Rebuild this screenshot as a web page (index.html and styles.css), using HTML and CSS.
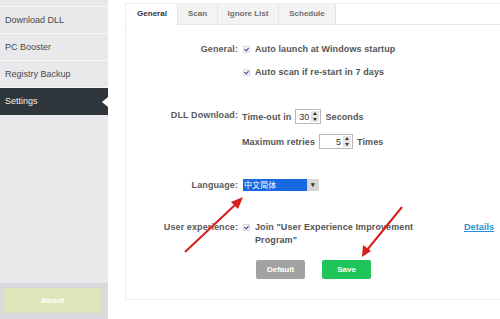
FILE: index.html
```html
<!DOCTYPE html>
<html lang="en">
<head>
  <meta charset="UTF-8">
  <title>Settings</title>
  <link rel="stylesheet" href="styles.css">
</head>
<body>

  <div class="app">
    <aside class="sidebar">
      <div class="menu">
        <div class="menu-item cut"></div>
        <div class="menu-item">Download DLL</div>
        <div class="menu-item">PC Booster</div>
        <div class="menu-item">Registry Backup</div>
        <div class="menu-item active">Settings</div>
      </div>
      <div class="sidebar-foot">
        <button class="about-btn">About</button>
      </div>
    </aside>

    <main class="main">
      <div class="panel">
        <div class="tabs">
          <div class="tab active">General</div>
          <div class="tab">Scan</div>
          <div class="tab">Ignore List</div>
          <div class="tab">Schedule</div>
        </div>

        <div class="form">
          <div class="row r1">
            <div class="label">General:</div>
            <div class="value"><span class="check"></span>Auto launch at Windows startup</div>
          </div>
          <div class="row r2">
            <div class="label"></div>
            <div class="value"><span class="check"></span>Auto scan if re-start in 7 days</div>
          </div>

          <div class="row r3">
            <div class="label">DLL Download:</div>
            <div class="value">Time-out in <span class="spin w25">30<i class="arrows"></i></span> Seconds</div>
          </div>
          <div class="row r4">
            <div class="label"></div>
            <div class="value">Maximum retries <span class="spin w34">5<i class="arrows"></i></span> Times</div>
          </div>

          <div class="row r5">
            <div class="label">Language:</div>
            <div class="value">
              <span class="select"><span class="select-text">中文简体</span><span class="select-btn">▾</span></span>
            </div>
          </div>

          <div class="row r6">
            <div class="label">User experience:</div>
            <div class="value top">
              <span class="check"></span>
              <span class="join">Join "User Experience Improvement Program"</span>
              <a class="details" href="#">Details</a>
            </div>
          </div>

          <div class="buttons">
            <button class="btn btn-default">Default</button>
            <button class="btn btn-save">Save</button>
          </div>
        </div>
      </div>
    </main>
  </div>

  <!-- red annotation arrows over the page -->
  <svg class="arrows-overlay" width="500" height="319" viewBox="0 0 500 319">
    <line x1="185" y1="252" x2="236" y2="204" stroke="#d81e1e" stroke-width="2"/>
    <polygon points="243,197 231,202 238,209" fill="#d81e1e"/>
    <line x1="402" y1="207" x2="367" y2="250" stroke="#d81e1e" stroke-width="2"/>
    <polygon points="362,257 363,245 371,251" fill="#d81e1e"/>
  </svg>

</body>
</html>
```

FILE: styles.css
```css
* {
  margin: 0;
  padding: 0;
  box-sizing: border-box;
}

body {
  background: #fff;
  font-family: 'Liberation Sans', Arial, sans-serif;
  color: #555;
  width: 500px;
  height: 319px;
  overflow: hidden;
  position: relative;
}

.app {
  display: flex;
  height: 319px;
}

/* sidebar */
.sidebar {
  width: 108px;
  display: flex;
  flex-direction: column;
  background: #e9e9eb;
}

.menu {
  flex: 1;
}

.menu-item {
  height: 27px;
  line-height: 26px;
  padding-left: 5px;
  font-size: 9px;
  color: #4a4a4a;
  border-bottom: 1px solid #f6f6f7;
  position: relative;
}

.menu-item.cut {
  height: 7px;
}

.menu-item.active {
  background: #2f363c;
  color: #f2f2f2;
  border-bottom: none;
}

.menu-item.active::after {
  content: "";
  position: absolute;
  right: 0;
  top: 9px;
  border-style: solid;
  border-width: 5px 6px 5px 0;
  border-color: transparent #fff transparent transparent;
}

.sidebar-foot {
  height: 36px;
  background: #d9dadd;
  padding: 5px 7px 5px 4px;
}

.about-btn {
  width: 100%;
  height: 25px;
  border: none;
  background: #dfe5bb;
  color: #fff;
  font-family: inherit;
  font-size: 8px;
  font-weight: bold;
}

/* main panel */
.main {
  flex: 1;
  padding: 3px 0 0 17px;
}

.panel {
  height: 297px;
  border: 1px solid #ececec;
  border-right: none;
}

.tabs {
  display: flex;
  height: 21px;
  border-bottom: 1px solid #e8e8e8;
  padding-left: 1px;
}

.tab {
  line-height: 20px;
  font-size: 8px;
  font-weight: bold;
  color: #707070;
  background: #f3f3f3;
  border-right: 1px solid #e4e4e4;
  text-align: center;
}

.tab:nth-child(1) { width: 51px; }
.tab:nth-child(2) { width: 40px; }
.tab:nth-child(3) { width: 61px; }
.tab:nth-child(4) { width: 57px; }

.tab.active {
  background: #fff;
  color: #333;
  height: 21px;
}

/* form */
.form {
  font-size: 9px;
  font-weight: bold;
  letter-spacing: 0.1px;
}

.row {
  display: grid;
  grid-template-columns: 112px 1fr;
  column-gap: 4px;
  line-height: 12px;
}

.label {
  text-align: right;
  color: #5a5a5a;
}

.value {
  display: flex;
  align-items: center;
  color: #555;
  white-space: nowrap;
}

.value.top {
  align-items: flex-start;
}

.r1 { margin-top: 18px; }
.r2 { margin-top: 11px; }
.r3 { margin-top: 31px; }
.r4 { margin-top: 10px; }
.r5 { margin-top: 30px; }
.r6 { margin-top: 30px; line-height: 13px; }

.check {
  display: inline-block;
  width: 7px;
  height: 7px;
  margin: 0 5px 0 1px;
  border: 1px solid #dcdcdc;
  background: #f7f5fb;
  position: relative;
  flex: none;
}

.value.top .check {
  margin-top: 3px;
}

.check::after {
  content: "";
  position: absolute;
  left: 1px;
  top: 0;
  width: 2px;
  height: 3px;
  border: solid #5b2a9a;
  border-width: 0 1.5px 1.5px 0;
  transform: rotate(40deg);
}

.spin {
  display: inline-flex;
  justify-content: flex-end;
  align-items: center;
  height: 15px;
  margin: 0 4px;
  padding-right: 1px;
  border: 1px solid #b8b8b8;
  font-weight: normal;
  color: #333;
}

.w25 { width: 26px; }
.w34 { width: 34px; }

.arrows {
  width: 8px;
  height: 11px;
  margin-left: 2px;
  background: #e4e4e4;
  position: relative;
}

.arrows::before,
.arrows::after {
  content: "";
  position: absolute;
  left: 2px;
  border-style: solid;
  border-color: transparent;
}

.arrows::before {
  top: 1px;
  border-width: 0 2px 3px 2px;
  border-bottom-color: #333;
}

.arrows::after {
  bottom: 1px;
  border-width: 3px 2px 0 2px;
  border-top-color: #333;
}

.select {
  display: inline-flex;
  height: 12px;
  margin-left: 1px;
}

.select-text {
  width: 64px;
  background: #1769e0;
  color: #fff;
  font-family: 'Noto Sans CJK SC', sans-serif;
  font-weight: normal;
  font-size: 8px;
  line-height: 12px;
  padding-left: 1px;
}

.select-btn {
  width: 12px;
  background: #d8d6d0;
  color: #333;
  font-size: 7px;
  line-height: 12px;
  text-align: center;
}

.join {
  width: 160px;
  white-space: normal;
}

.details {
  margin-left: 49px;
  color: #2a8fd4;
  text-decoration: underline;
}

.buttons {
  display: flex;
  gap: 17px;
  margin: 13px 0 0 130px;
}

.btn {
  width: 49px;
  height: 19px;
  border: none;
  border-radius: 2px;
  color: #fff;
  font-family: inherit;
  font-size: 8px;
  font-weight: bold;
}

.btn-default {
  background: #a2a2a2;
}

.btn-save {
  background: #1fc55a;
}

.arrows-overlay {
  position: absolute;
  left: 0;
  top: 0;
  pointer-events: none;
}
```
